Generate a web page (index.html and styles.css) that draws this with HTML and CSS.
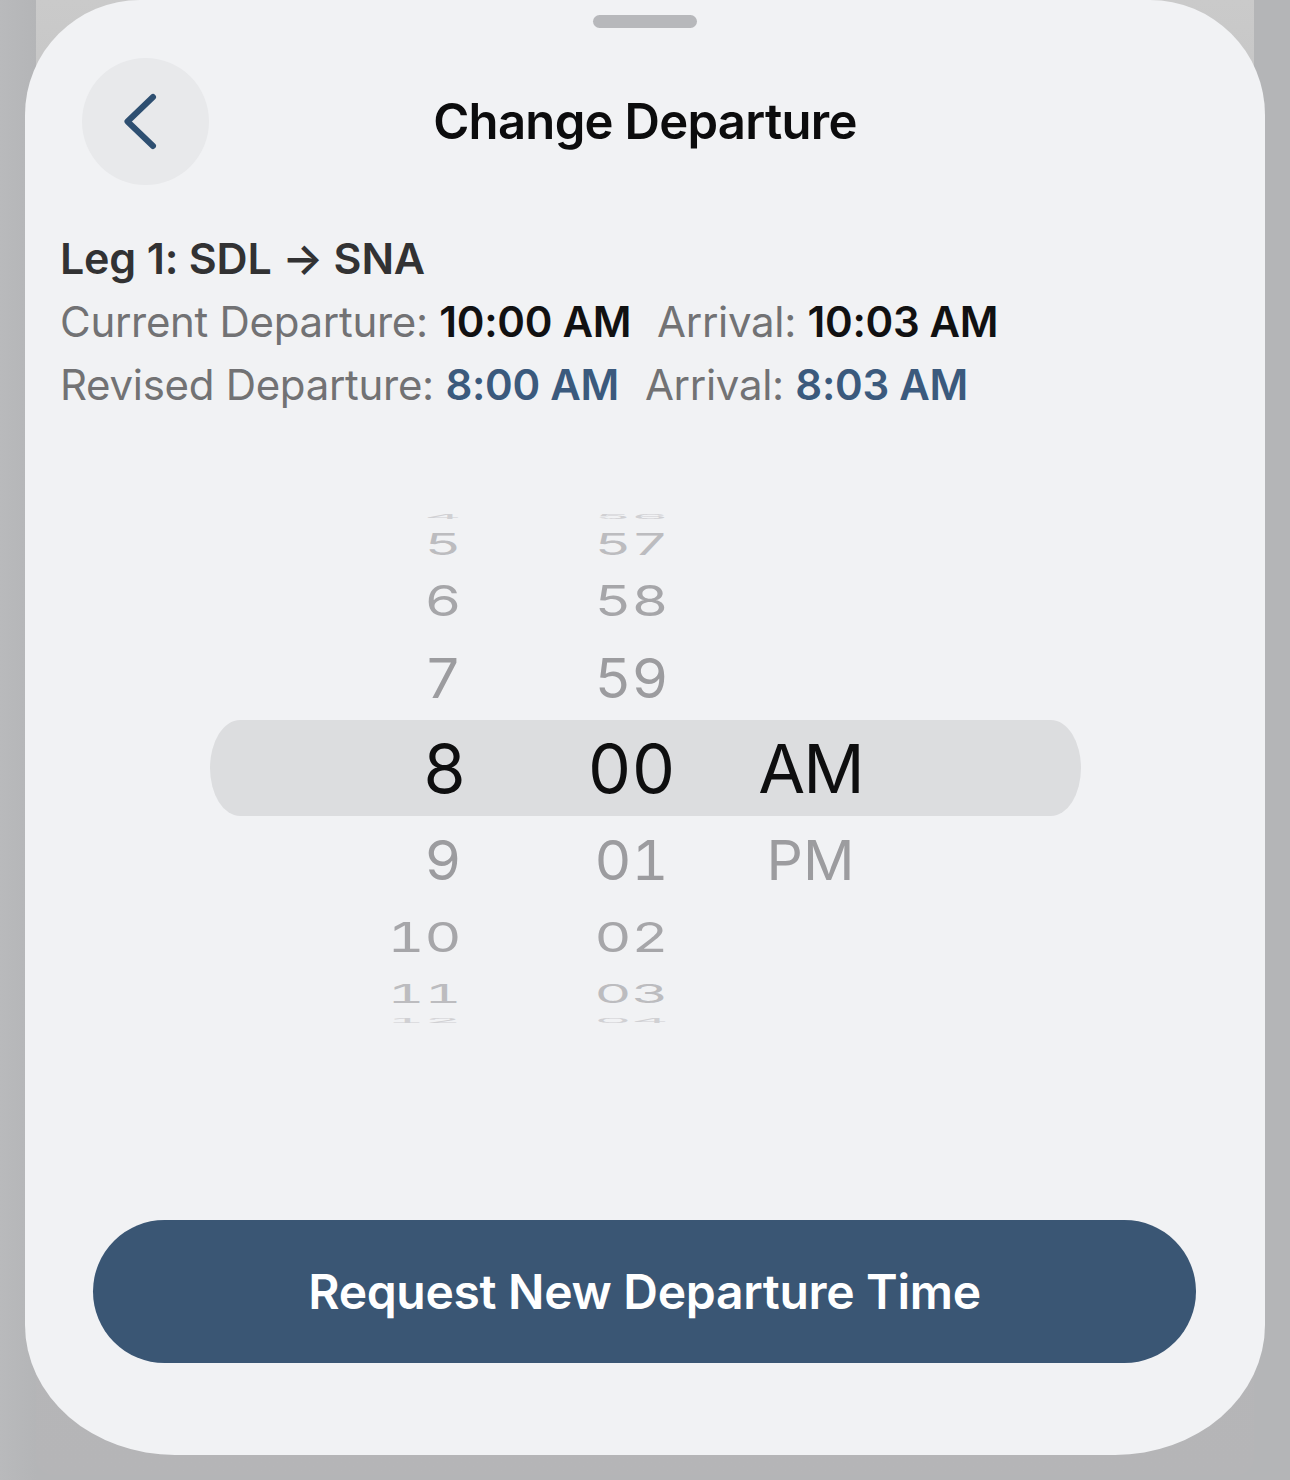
FILE: index.html
```html
<!DOCTYPE html>
<html lang="en">
<head>
<meta charset="utf-8">
<title>Change Departure</title>
<link rel="stylesheet" href="styles.css">
</head>
<body>
<div class="backdrop">
  <div class="behind-card"></div>
</div>
<div class="sheet">
  <div class="handle"></div>
  <header class="header">
    <button class="back" aria-label="Back">
      <svg width="127" height="127" viewBox="0 0 127 127" aria-hidden="true">
        <path d="M71 39 L45.5 63.5 L71 88" fill="none" stroke="#2e4f71" stroke-width="6" stroke-linecap="round" stroke-linejoin="round"/>
      </svg>
    </button>
    <h1 class="title">Change Departure</h1>
    <span class="spacer"></span>
  </header>

  <section class="info">
    <div class="leg">Leg 1: SDL → SNA</div>
    <div class="row"><span class="lbl">Current Departure:</span> <span class="val">10:00 AM</span><span class="lbl sep">Arrival:</span> <span class="val">10:03 AM</span></div>
    <div class="row"><span class="lbl">Revised Departure:</span> <span class="val blue">8:00 AM</span><span class="lbl sep">Arrival:</span> <span class="val blue">8:03 AM</span></div>
  </section>

  <div class="picker">
    <div class="prow u4"><span class="h"><i>4</i></span><span class="m"><i>56</i></span><span class="ap"></span></div>
    <div class="prow u3"><span class="h"><i>5</i></span><span class="m"><i>57</i></span><span class="ap"></span></div>
    <div class="prow u2"><span class="h"><i>6</i></span><span class="m"><i>58</i></span><span class="ap"></span></div>
    <div class="prow u1"><span class="h"><i>7</i></span><span class="m"><i>59</i></span><span class="ap"></span></div>
    <div class="prow sel"><span class="h"><i>8</i></span><span class="m"><i>00</i></span><span class="ap"><i>AM</i></span></div>
    <div class="prow d1"><span class="h"><i>9</i></span><span class="m"><i>01</i></span><span class="ap"><i>PM</i></span></div>
    <div class="prow d2"><span class="h"><i>10</i></span><span class="m"><i>02</i></span><span class="ap"></span></div>
    <div class="prow d3"><span class="h"><i>11</i></span><span class="m"><i>03</i></span><span class="ap"></span></div>
    <div class="prow d4"><span class="h"><i>12</i></span><span class="m"><i>04</i></span><span class="ap"></span></div>
  </div>

  <button class="cta">Request New Departure Time</button>
</div>
</body>
</html>
```

FILE: styles.css
```css
* { box-sizing: border-box; }
html, body { margin: 0; padding: 0; }
body {
  width: 1290px;
  height: 1480px;
  overflow: hidden;
  background: linear-gradient(90deg, #b9babc 0, #b4b5b7 36px);
  font-family: Inter, "Noto Sans", "Liberation Sans", sans-serif;
  position: relative;
}
.backdrop {
  height: 1480px;
  padding: 0 36px;
}
.behind-card {
  height: 1475px;
  border-radius: 0 0 18px 18px;
  background: linear-gradient(180deg, #cacaca 0, #c4c4c4 160px, #b9b9bb 420px, #b5b5b7 100%);
}
.sheet {
  position: absolute;
  left: 25px;
  top: 0;
  width: 1240px;
  height: 1455px;
  background: #f1f2f4;
  border-radius: 115px 115px 150px 150px / 115px 115px 130px 130px;
  display: flex;
  flex-direction: column;
}
.handle {
  width: 104px;
  height: 13px;
  border-radius: 7px;
  background: #b7b8bb;
  margin: 15px auto 0;
}
.header {
  display: grid;
  grid-template-columns: 127px 1fr 127px;
  align-items: center;
  padding: 0 57px;
  margin-top: 30px;
  height: 127px;
}
.back {
  width: 127px;
  height: 127px;
  border-radius: 50%;
  border: 0;
  padding: 0;
  background: #e8e9eb;
  display: block;
}
.back svg { display: block; }
.title {
  margin: 0;
  text-align: center;
  font-size: 49px;
  font-weight: 600;
  letter-spacing: -0.7px;
  color: #0c0c0d;
  line-height: 1;
}
.info {
  margin-top: 42px;
  padding-left: 35px;
  font-size: 42px;
  line-height: 63px;
  letter-spacing: -0.3px;
}
.leg {
  font-weight: 600;
  font-size: 43px;
  letter-spacing: -0.2px;
  color: #323233;
}
.row { white-space: nowrap; }
.lbl { color: #727274; font-weight: 400; }
.lbl.sep { margin-left: 26px; }
.val { color: #111112; font-weight: 600; }
.val.blue { color: #3b5a7d; }

.picker {
  margin: 92px auto 0;
  width: 871px;
  display: flex;
  flex-direction: column;
}
.prow {
  display: grid;
  grid-template-columns: 257px 94px 142px 216px 1fr;
  grid-template-rows: minmax(0, 1fr);
  font-size: 57px;
  font-weight: 400;
  line-height: 1;
  white-space: nowrap;
  font-variant-numeric: tabular-nums;
}
.prow span {
  display: flex;
  align-items: center;
  height: 100%;
}
.prow .h { grid-column: 1; justify-content: flex-end; padding-right: 5px; }
.prow .m { grid-column: 3; justify-content: center; }
.prow .ap { grid-column: 4; justify-content: center; }
.prow i { font-style: normal; display: inline-block; }

.u4 { height: 16px; color: #d0d0d3; }
.u4 i { transform: scaleY(0.12); }
.u3 { height: 40px; color: #bcbcbf; }
.u3 i { transform: scaleY(0.52); }
.u2 { height: 72px; color: #a6a6a9; }
.u2 i { transform: scaleY(0.74); }
.u1 { height: 84px; color: #9c9c9f; }
.u1 i { transform: scaleY(0.97); }
.sel {
  height: 96px;
  background: #dcdddf;
  border-radius: 30px / 48px;
  color: #0e0e0f;
  font-size: 68px;
}
.sel .h { padding-right: 0; }
.sel .ap i { letter-spacing: -2px; }
.d1 { height: 88px; color: #9c9c9f; }
.d1 i { transform: scaleY(0.97); }
.d2 { height: 66px; color: #a6a6a9; }
.d2 i { transform: scaleY(0.71); }
.d3 { height: 46px; color: #bcbcbf; }
.d3 i { transform: scaleY(0.45); }
.d4 { height: 8px; color: #d0d0d3; }
.d4 i { transform: scaleY(0.1); }

.cta {
  margin: 196px 69px 0 68px;
  height: 143px;
  border: 0;
  border-radius: 72px;
  background: #3a5674;
  color: #ffffff;
  font-family: Inter, "Noto Sans", "Liberation Sans", sans-serif;
  font-size: 48px;
  font-weight: 600;
  letter-spacing: -0.3px;
}
```
